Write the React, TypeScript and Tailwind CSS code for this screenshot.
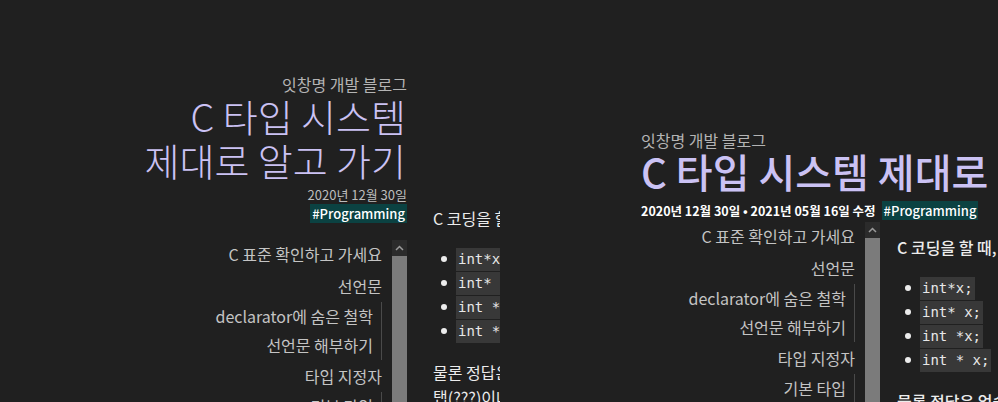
type TocItem = { title: string; children?: string[] };

const TOC: TocItem[] = [
  { title: "C 표준 확인하고 가세요" },
  { title: "선언문", children: ["declarator에 숨은 철학", "선언문 해부하기"] },
  { title: "타입 지정자", children: ["기본 타입", "구조체와 공용체", "열거형"] },
  { title: "타입 한정자" },
];

const CODES = ["int*x;", "int* x;", "int *x;", "int * x;"];

function Scrollbar() {
  return (
    <div className="mt-[2px] flex w-[15px] shrink-0 flex-col">
      <div className="flex h-[16px] items-center justify-center bg-[#2b2b2b]">
        <svg width="9" height="6" viewBox="0 0 9 6" fill="none">
          <path d="M1 5L4.5 1.5L8 5" stroke="#9a9a9a" strokeWidth="1.5" />
        </svg>
      </div>
      <div className="flex-1 bg-[#7b7b7b]" />
    </div>
  );
}

function Toc({ height }: { height: string }) {
  return (
    <div className={`flex overflow-hidden ${height}`}>
      <ul className="flex-1 pr-[10px] text-right text-[16px] whitespace-nowrap text-[#c4c4c4]">
        {TOC.map((item) => (
          <li key={item.title}>
            <div className="leading-[32px]">{item.title}</div>
            {item.children && (
              <ul className="border-r border-[#4a4a4a] pr-[8px]">
                {item.children.map((c) => (
                  <li key={c} className="leading-[29px]">
                    {c}
                  </li>
                ))}
              </ul>
            )}
          </li>
        ))}
      </ul>
      <Scrollbar />
    </div>
  );
}

function Tag() {
  return (
    <span className="block bg-[#0b4242] px-[2px] text-[13px] leading-[19px] font-medium text-white">
      #Programming
    </span>
  );
}

function CodeList() {
  return (
    <ul className="my-[17px]">
      {CODES.map((c) => (
        <li key={c} className="flex h-[24px] items-center">
          <span className="ml-[8px] mr-[9px] h-[6px] w-[6px] shrink-0 rounded-full bg-[#ececec]" />
          <code className="inline-block bg-[#383838] px-[2px] font-['DejaVu_Sans_Mono',monospace] text-[14px] leading-[23px] whitespace-pre text-[#e8e8e8]">
            {c}
          </code>
        </li>
      ))}
    </ul>
  );
}

function NarrowPage() {
  return (
    <div className="flex w-[500px] shrink-0 overflow-hidden">
      <aside className="ml-[127px] w-[280px] shrink-0 pt-[74px]">
        <div className="text-right">
          <div className="text-[16px] leading-[20px] text-[#b4b4b4]">잇창명 개발 블로그</div>
          <h1 className="pr-[1px] text-[38px] leading-[44px] font-light break-keep text-[#cbc2f4]">
            C 타입 시스템 제대로 알고 가기
          </h1>
          <div className="mt-[3px] text-[13px] leading-[19px] text-[#bdbdbd]">2020년 12월 30일</div>
          <div className="flex justify-end">
            <Tag />
          </div>
        </div>
        <div className="mt-[15px]">
          <Toc height="h-[200px]" />
        </div>
      </aside>
      <main className="ml-[26px] w-[480px] shrink-0 pt-[206px] text-[16px] leading-[24px] text-[#ececec]">
        <p className="whitespace-nowrap">C 코딩을 할 때, 포인터 변수를 어떻게 선언하시나요?</p>
        <CodeList />
        <p className="whitespace-nowrap leading-[25px]">
          물론 정답은 없습니다. 컴파일러 입장에서는 공백이나
          <br />
          탭(???)이나 아무런 차이가 없으니까요.
        </p>
      </main>
    </div>
  );
}

function WidePage() {
  return (
    <div className="ml-[141px] min-w-0 flex-1 overflow-hidden pt-[130px]">
      <header className="whitespace-nowrap">
        <div className="text-[16px] leading-[20px] text-[#b4b4b4]">잇창명 개발 블로그</div>
        <h1 className="-mt-[1px] text-[40px] leading-[44px] font-medium text-[#cbc2f4]">
          C 타입 시스템 제대로 알고 가기
        </h1>
        <div className="mt-[8px] flex items-center gap-[6px] text-[12.5px] leading-[19px] font-bold text-white">
          <span>2020년 12월 30일 • 2021년 05월 16일 수정</span>
          <Tag />
        </div>
      </header>
      <div className="flex">
        <div className="w-[239px] shrink-0">
          <Toc height="h-[190px]" />
        </div>
        <main className="ml-[17px] pt-[15px] text-[16px] leading-[24px] font-medium whitespace-nowrap text-[#ececec]">
          <p>C 코딩을 할 때, 포인터 변수를 어떻게 선언하시나요?</p>
          <CodeList />
          <p>물론 정답은 없습니다. 컴파일러 입장에서는 공백이나 탭(???)이나 아무런 차이가 없으니까요.</p>
        </main>
      </div>
    </div>
  );
}

export default function App() {
  return (
    <div className="flex h-[402px] w-[998px] overflow-hidden bg-[#202020] font-['Noto_Sans_CJK_KR','Noto_Sans',sans-serif]">
      <NarrowPage />
      <WidePage />
    </div>
  );
}
